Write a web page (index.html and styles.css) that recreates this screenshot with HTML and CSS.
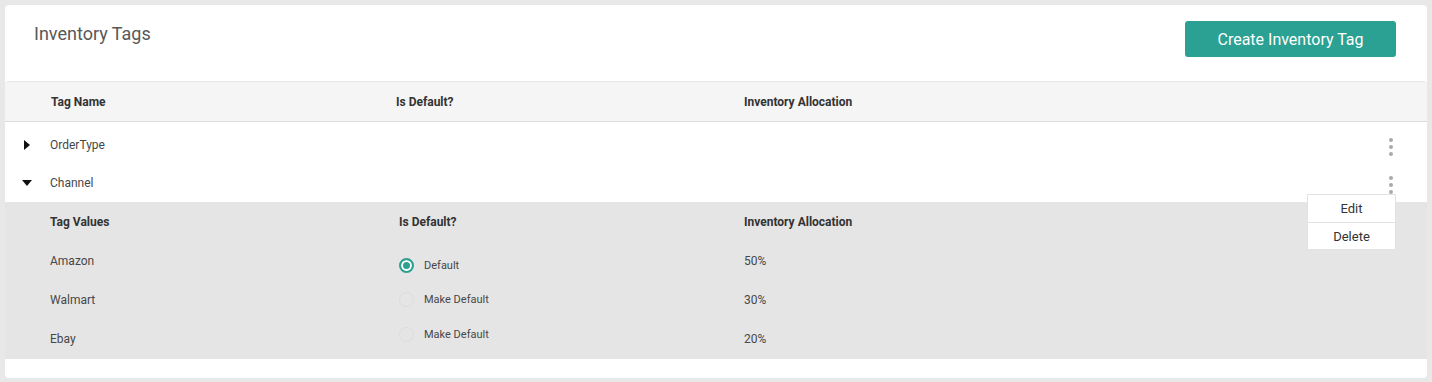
FILE: index.html
```html
<!DOCTYPE html>
<html lang="en">
<head>
    <meta charset="UTF-8">
    <title>Inventory Tags</title>
    <link rel="stylesheet" href="styles.css">
</head>
<body>
    <div class="card">
        <div class="card-header">
            <h1 class="title">Inventory Tags</h1>
            <button class="btn-create">Create Inventory Tag</button>
        </div>

        <div class="table-head">
            <div>Tag Name</div>
            <div>Is Default?</div>
            <div>Inventory Allocation</div>
        </div>

        <div class="tag-rows">
            <div class="tag-row">
                <span class="caret caret-right"></span>
                <span class="tag-name">OrderType</span>
                <span class="kebab"><i></i><i></i><i></i></span>
            </div>
            <div class="tag-row">
                <span class="caret caret-down"></span>
                <span class="tag-name">Channel</span>
                <span class="kebab"><i></i><i></i><i></i></span>
                <div class="row-menu">
                    <div class="menu-item">Edit</div>
                    <div class="menu-item">Delete</div>
                </div>
            </div>
        </div>

        <div class="values">
            <div class="values-head">Tag Values</div>
            <div class="values-head col-default">Is Default?</div>
            <div class="values-head">Inventory Allocation</div>

            <div class="value-cell">Amazon</div>
            <div class="radio-group">
                <label class="radio checked"><span class="dot"></span>Default</label>
                <label class="radio"><span class="dot"></span>Make Default</label>
                <label class="radio"><span class="dot"></span>Make Default</label>
            </div>
            <div class="value-cell">50%</div>

            <div class="value-cell">Walmart</div>
            <div class="value-cell">30%</div>

            <div class="value-cell">Ebay</div>
            <div class="value-cell">20%</div>
        </div>
    </div>
</body>
</html>
```

FILE: styles.css
```css
* {
    margin: 0;
    padding: 0;
    box-sizing: border-box;
}

body {
    font-family: Roboto, "Liberation Sans", sans-serif;
    background: #e8e8e8;
    padding: 5px;
    color: #474747;
}

.card {
    background: #fff;
    border-radius: 4px;
    height: 373px;
}

.card-header {
    display: flex;
    justify-content: space-between;
    align-items: flex-start;
    height: 76px;
    padding: 16px 31px 0 29px;
}

.title {
    font-size: 18px;
    font-weight: 400;
    line-height: 22px;
    color: #585858;
    margin-top: 2px;
}

.btn-create {
    width: 211px;
    height: 36px;
    background: #2aa192;
    color: #fff;
    border: none;
    border-radius: 3px;
    font-family: inherit;
    font-size: 16px;
}

.table-head {
    display: grid;
    grid-template-columns: 345px 348px 1fr;
    align-items: center;
    height: 41px;
    padding-left: 46px;
    background: #f5f5f5;
    border-top: 1px solid #e6e6e6;
    border-bottom: 1px solid #dcdcdc;
    border-radius: 4px 4px 0 0;
    font-size: 12px;
    font-weight: 700;
    color: #333;
}

.tag-rows {
    padding-top: 4px;
}

.tag-row {
    position: relative;
    display: flex;
    align-items: center;
    height: 38px;
    font-size: 12px;
}

.caret {
    width: 0;
    height: 0;
}

.caret-right {
    border-top: 5px solid transparent;
    border-bottom: 5px solid transparent;
    border-left: 6px solid #111;
    margin-left: 19px;
    margin-right: 20px;
}

.caret-down {
    border-left: 5px solid transparent;
    border-right: 5px solid transparent;
    border-top: 6px solid #111;
    margin-left: 17px;
    margin-right: 18px;
}

.tag-name {
    flex: 1;
}

.kebab {
    display: flex;
    flex-direction: column;
    gap: 3px;
    margin-right: 34px;
    margin-top: 3px;
}

.kebab i {
    display: block;
    width: 4px;
    height: 4px;
    border-radius: 50%;
    background: #aaa;
}

.row-menu {
    position: absolute;
    right: 31px;
    top: 30px;
    width: 89px;
    background: #fff;
    border: 1px solid #e2e2e2;
    z-index: 2;
}

.menu-item {
    height: 27px;
    line-height: 27px;
    text-align: center;
    font-size: 13px;
    color: #333;
}

.menu-item + .menu-item {
    border-top: 1px solid #e2e2e2;
}

.values {
    display: grid;
    grid-template-columns: 349px 345px 1fr;
    grid-template-rows: repeat(4, 39px);
    align-items: center;
    height: 157px;
    padding-left: 45px;
    background: #e5e5e5;
    font-size: 12px;
}

.values-head {
    font-weight: 700;
    color: #333;
}

.radio-group {
    grid-column: 2;
    grid-row: 2 / span 3;
    align-self: stretch;
    display: flex;
    flex-direction: column;
    gap: 14.5px;
    padding-top: 14px;
}

.radio {
    display: flex;
    align-items: center;
    height: 20px;
    font-size: 11px;
    color: #474747;
}

.radio .dot {
    width: 15px;
    height: 15px;
    border-radius: 50%;
    border: 1px solid #dcdcdc;
    margin-right: 10px;
}

.radio.checked .dot {
    border: 2px solid #2aa192;
    background: #2aa192;
    box-shadow: inset 0 0 0 2px #fff;
}
```
